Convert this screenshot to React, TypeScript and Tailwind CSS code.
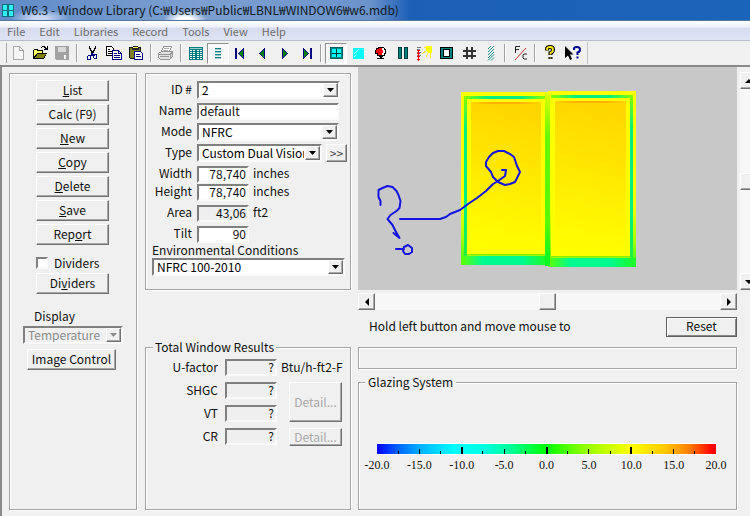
import type { ReactNode } from "react";

const RAISED =
  "border border-t-white border-l-white border-r-[#707070] border-b-[#707070] shadow-[inset_-1px_-1px_0_#a8a8a8] bg-[#f0f0f0]";
const SUNKEN =
  "border-2 border-t-[#808080] border-l-[#808080] border-r-[#fafafa] border-b-[#fafafa]";
const ETCHED = "border border-[#a5a5a5] shadow-[1px_1px_0_#ffffff,inset_1px_1px_0_#ffffff]";

/* ---------- toolbar icons, drawn on a 16 x 16 grid ---------- */

function Glyph({ children }: { children: ReactNode }) {
  return (
    <svg width="16" height="16" viewBox="0 0 16 16" fill="none" shapeRendering="crispEdges" aria-hidden="true">
      {children}
    </svg>
  );
}

const NewIcon = () => (
  <Glyph>
    <path d="M3.5 1.5h6l4 4v9h-10zM9.500 1.500v4h4" stroke="#a8a8a8" fill="#f6f6f6" />
  </Glyph>
);
const OpenIcon = () => (
  <Glyph>
    <path d="M1 14V5h1V4h4v1h5v3h4l-3 6z" fill="#000" />
    <path d="M2 5h3v1h5v2H5l-3 4z" fill="#ffff66" />
    <path d="M5.500 9H14l-2.500 4H3z" fill="#808000" />
    <path d="M9 2h1V1h3v1h1v1h1V1h1v4h-4V4h1V3h-1V2h-2v1H9z" fill="#000" />
  </Glyph>
);
const SaveIcon = () => (
  <Glyph>
    <path d="M1 1h14v14H2l-1-1z" fill="#a2a2a2" />
    <path d="M4 2h8v5H4z" fill="#dadada" />
    <path d="M10 10h2v4h-2z" fill="#f4f4f4" />
  </Glyph>
);
const CutIcon = () => (
  <Glyph>
    <path d="M5 1h1v2h1v2h1v1h1V5h1V3h1V1h1v3h-1v2h-1v2H9v1H8V8H7V6H6V4H5z" fill="#000" />
    <path d="M7 8h2v2h2v1H6v-1h1z" fill="#000080" />
    <path d="M4.500 10.500h2v4h-3v-3zM9.500 9.500h3v4h-2l-1-1z" stroke="#000080" />
  </Glyph>
);
const CopyIcon = () => (
  <Glyph>
    <path d="M.5 1.500h5l2 2v7h-7z" fill="#fff" stroke="#000" />
    <path d="M2 4h2M2 6h4M2 8h4" stroke="#000" />
    <path d="M6.500 5.500h6l3 3v6h-9z" fill="#fff" stroke="#000080" />
    <path d="M12.500 5v3.500H15M8 8.500h3M8 10.500h6M8 12.500h6" stroke="#000080" />
  </Glyph>
);
const PasteIcon = () => (
  <Glyph>
    <path d="M1 2h4V1h5v1h3v12H2l-1-1z" fill="#111" />
    <path d="M2 3h10v10H2z" fill="#808020" />
    <path d="M4 2h7v3H4z" fill="#222" />
    <path d="M5 2h5v1H5z" fill="#ffff55" />
    <path d="M6.500 6.500h6l2 2v6h-8z" fill="#fff" stroke="#000080" />
    <path d="M8 9.500h4M8 11.500h5" stroke="#000080" />
  </Glyph>
);
const PrintIcon = () => (
  <Glyph>
    <path d="M5.500 1.500h8l-2 5h-8z" fill="#f8f8f8" stroke="#969696" />
    <path d="M6 3.500h5M5 5.500h5" stroke="#b0b0b0" />
    <path d="M.5 8.500l3-2h11v5l-3 3h-9l-2-2z" fill="#e2e2e2" stroke="#969696" />
    <path d="M1 9.500h11v4M12 9l3-2M2 11.500h9" stroke="#969696" />
  </Glyph>
);
const GridIcon = () => (
  <Glyph>
    <path d="M1 2h14v13H1z" fill="#007c7c" />
    <path d="M2.500 5v9M6 5v9M9.500 5v9M13 5v9" stroke="#fff" strokeWidth="2" />
    <path d="M2 6.500h12M2 8.500h12M2 10.500h12M2 12.500h12" stroke="#007c7c" />
    <path d="M2 3.500h12" stroke="#9fcccc" />
  </Glyph>
);
const ListIcon = () => (
  <Glyph>
    <path d="M5 3.500h6M5 6.500h6M5 9.500h6M5 12.500h6" stroke="#008080" />
    <path d="M5 4.500h6M5 7.500h6M5 10.500h6M5 13.500h6" stroke="#9ccaca" />
  </Glyph>
);
const FirstIcon = () => (
  <Glyph>
    <path d="M3 3h2v11H3z" fill="#000080" />
    <path d="M12 3v11L6 8.500z" fill="#000080" />
    <path d="M11 5v7L7 8.500z" fill="#008000" />
  </Glyph>
);
const PrevIcon = () => (
  <Glyph>
    <path d="M11 3v11L5 8.500z" fill="#000080" />
    <path d="M10 5v7L6 8.500z" fill="#008000" />
  </Glyph>
);
const NextIcon = () => (
  <Glyph>
    <path d="M6 3v11l6-5.500z" fill="#000080" />
    <path d="M7 5v7l4-3.500z" fill="#008000" />
  </Glyph>
);
const LastIcon = () => (
  <Glyph>
    <path d="M12 3h2v11h-2z" fill="#000080" />
    <path d="M5 3v11l6-5.500z" fill="#000080" />
    <path d="M6 5v7l4-3.500z" fill="#008000" />
  </Glyph>
);
const WindowIcon = () => (
  <Glyph>
    <path d="M2 2h13v12H2z" fill="#006060" />
    <path d="M4 4h9v8H4z" fill="#00ffff" />
    <path d="M8 3h1v10H8zM3 8h11v1H3z" fill="#003838" />
    <path d="M3.500 3.500h10v9h-10z" stroke="#008888" />
  </Glyph>
);
const GlassIcon = () => (
  <Glyph>
    <path d="M3 3h11v11H3z" fill="#00ffff" />
    <path d="M4 9l5-5M4 12l2-2M12 5l1-1" stroke="#b8ffff" />
  </Glyph>
);
const LampIcon = () => (
  <Glyph>
    <path d="M6 2h6v1h1v1h1v5h-1v2h-2v1H7v-1H5V9H3V5h1V3h2z" fill="#000" />
    <path d="M10 3h2v2h1v3h-1v2h-2z" fill="#fff" />
    <path d="M5 4h2V3h3v2h1v3h-1v2H6V8H4V5h1z" fill="#ff0000" />
    <path d="M8 11h2v2h2v1H5v-1h3z" fill="#000" />
  </Glyph>
);
const GapIcon = () => (
  <Glyph>
    <path d="M4 2h4v12H4zM10 2h4v12h-4z" fill="#003c3c" />
    <path d="M5 3h2v10H5zM11 3h2v10h-2z" fill="#008080" />
  </Glyph>
);
const SunIcon = () => (
  <Glyph>
    <path d="M10 1h6v7h-4l-2-2z" fill="#ffff00" />
    <path d="M10 2H8M10 6L6 9M12 8l-2 4M14 8l1 5" stroke="#ffe92a" />
    <path d="M1 2.500h4M1 4.500h3M1 7.500h4M1 10.500h4" stroke="#777" />
    <path d="M2 5h1v11H2z" fill="#ff0000" />
    <path d="M1 5.500h3M1 8.500h3M1 11.500h3M1 14.500h3" stroke="#ff0000" />
  </Glyph>
);
const FrameIcon = () => (
  <Glyph>
    <path d="M2 2h13v12H2z" fill="#000" />
    <path d="M3 3h11v10H3z" fill="#008080" />
    <path d="M5 4h7v8H5z" fill="#000" />
    <path d="M6 5h5v6H6z" fill="#fff" />
  </Glyph>
);
const HashIcon = () => (
  <Glyph>
    <path d="M7 2v12M12 2v12M3 6h13M3 11h13" stroke="#333" strokeWidth="2" />
  </Glyph>
);
const HatchIcon = () => (
  <svg width="16" height="16" viewBox="0 0 16 16" aria-hidden="true">
    <path
      d="M6 4l3-3M6 7l6-6M6 10l6-6M6 13l6-6M6 15.500l6-6M9 15.500l3-3"
      stroke="#208f8f"
      strokeWidth="1"
      fill="none"
    />
  </svg>
);
const UnitsIcon = () => (
  <svg width="16" height="16" viewBox="0 0 16 16" fill="none" aria-hidden="true">
    <path d="M3.500 8V1.500H8M3.500 4.500H7M15 9h-3l-1 1v3l1 1h3" stroke="#222" />
    <path d="M3 15L14 3" stroke="#b03030" />
  </svg>
);
const HelpIcon = () => (
  <svg width="16" height="16" viewBox="0 0 16 16" fill="none" aria-hidden="true">
    <path d="M5 5.500V4q0-2 3-2t3 2.500T8.500 8v2M8.500 12v2" stroke="#000" strokeWidth="4" />
    <path d="M5 5V4q0-2 3-2t3 2.500T8.500 8v1.500M8.500 12.500v1" stroke="#ffee00" strokeWidth="1.800" />
  </svg>
);
const WhatsThisIcon = () => (
  <svg width="18" height="16" viewBox="0 0 18 16" fill="none" aria-hidden="true">
    <path d="M2 1v12l3-2.500L7 15l2-1-2-4.500h3.500z" fill="#000" />
    <path d="M11 5V3.500Q11 2 14 2t3 2.500-2.500 3V10M14.500 11.500v2" stroke="#000090" strokeWidth="2" />
  </svg>
);

type Tool = { name: string; icon: ReactNode; pressed?: boolean };

const TOOL_GROUPS: Tool[][] = [
  [
    { name: "New", icon: <NewIcon /> },
    { name: "Open", icon: <OpenIcon /> },
    { name: "Save", icon: <SaveIcon /> },
  ],
  [
    { name: "Cut", icon: <CutIcon /> },
    { name: "Copy", icon: <CopyIcon /> },
    { name: "Paste", icon: <PasteIcon /> },
  ],
  [{ name: "Print", icon: <PrintIcon /> }],
  [
    { name: "List view", icon: <GridIcon /> },
    { name: "Detail view", icon: <ListIcon />, pressed: true },
    { name: "First record", icon: <FirstIcon /> },
    { name: "Previous record", icon: <PrevIcon /> },
    { name: "Next record", icon: <NextIcon /> },
    { name: "Last record", icon: <LastIcon /> },
  ],
  [
    { name: "Window library", icon: <WindowIcon />, pressed: true },
    { name: "Glass library", icon: <GlassIcon /> },
    { name: "Gas library", icon: <LampIcon /> },
    { name: "Glazing systems", icon: <GapIcon /> },
    { name: "Environmental conditions", icon: <SunIcon /> },
    { name: "Frame library", icon: <FrameIcon /> },
    { name: "Divider library", icon: <HashIcon /> },
    { name: "Shading library", icon: <HatchIcon /> },
  ],
  [{ name: "Units", icon: <UnitsIcon /> }],
  [
    { name: "Help", icon: <HelpIcon /> },
    { name: "Context help", icon: <WhatsThisIcon /> },
  ],
];

function Toolbar() {
  return (
    <div role="toolbar" aria-label="Main" className="flex h-[26px] items-center border-b-2 border-[#8a8a8a] bg-[#f0f0f0] pl-1">
      <div className="h-5 w-[3px] border-r border-[#a8a8a8]" />
      <div className="flex items-center">
        {TOOL_GROUPS.map((group, i) => (
          <div key={i} className="flex items-center">
            {i > 0 && (
              <span className="flex w-2 justify-center">
                <span className="h-[18px] w-0.5 border-r border-l border-r-white border-l-[#a0a0a0]" />
              </span>
            )}
            {group.map((tool) => (
              <button
                key={tool.name}
                type="button"
                aria-label={tool.name}
                aria-pressed={tool.pressed}
                className={
                  tool.pressed
                    ? "flex h-[21px] w-[22px] items-center justify-center border border-t-[#909090] border-r-white border-b-white border-l-[#909090] bg-[#f8f8f8]"
                    : "flex h-[21px] w-[22px] items-center justify-center"
                }
              >
                {tool.icon}
              </button>
            ))}
          </div>
        ))}
      </div>
      <div className="ml-1 h-[22px] border-l border-[#c4c4c4]" />
    </div>
  );
}

/* ---------- form controls ---------- */

function PushButton({ children, className = "" }: { children: ReactNode; className?: string }) {
  return (
    <button
      type="button"
      className={`flex h-[21px] items-center justify-center pb-0.5 whitespace-nowrap ${RAISED} ${className}`}
    >
      <span>{children}</span>
    </button>
  );
}

function Combo({
  id,
  value,
  className = "",
  disabled = false,
}: {
  id: string;
  value: string;
  className?: string;
  disabled?: boolean;
}) {
  return (
    <div className={`relative h-[18px] ${SUNKEN} ${disabled ? "bg-[#f0f0f0]" : "bg-white"} ${className}`}>
      <select
        id={id}
        disabled={disabled}
        defaultValue={value}
        className="block h-[14px] w-full appearance-none overflow-hidden bg-transparent pr-4 pl-[3px] leading-[14px] text-black outline-none disabled:text-[#8c8c8c] disabled:opacity-100"
      >
        <option>{value}</option>
      </select>
      <span
        className={`pointer-events-none absolute top-0 right-0 flex h-[14px] w-[15px] items-center justify-center ${RAISED} ${disabled ? "text-[#8a8a8a]" : "text-black"}`}
      >
        <svg width="7" height="4" viewBox="0 0 7 4" aria-hidden="true">
          <path d="M0 0h7L3.500 4z" fill="currentColor" />
        </svg>
      </span>
    </div>
  );
}

function Field({
  id,
  value,
  className = "",
  readOnly = false,
}: {
  id: string;
  value: string;
  className?: string;
  readOnly?: boolean;
}) {
  return (
    <input
      id={id}
      type="text"
      defaultValue={value}
      readOnly={readOnly}
      className={`h-[17px] px-px pb-0.5 leading-[11px] outline-none ${SUNKEN} ${readOnly ? "bg-[#efefef]" : "bg-white"} ${className}`}
    />
  );
}

function Row({ id, label, children }: { id: string; label: string; children: ReactNode }) {
  return (
    <div className="flex h-[18px] items-center">
      <label htmlFor={id} className="mr-[5px] w-[46px] pb-0.5 text-right">
        {label}
      </label>
      {children}
    </div>
  );
}

function Unit({ children }: { children: ReactNode }) {
  return <span className="pb-0.5 pl-1 whitespace-nowrap">{children}</span>;
}

/* ---------- panels ---------- */

function ActionPanel() {
  return (
    <section aria-label="Actions" className={`flex w-32 shrink-0 flex-col pt-[6px] ${ETCHED}`}>
      <div className="ml-[26px] flex w-[73px] flex-col gap-[3px]">
        <PushButton><u>L</u>ist</PushButton>
        <PushButton>Calc (F9)</PushButton>
        <PushButton><u>N</u>ew</PushButton>
        <PushButton><u>C</u>opy</PushButton>
        <PushButton><u>D</u>elete</PushButton>
        <PushButton><u>S</u>ave</PushButton>
        <PushButton>Rep<u>o</u>rt</PushButton>
      </div>
      <div className="mt-[10px] ml-[26px] flex h-4 items-center gap-[6px]">
        <input id="dividers" type="checkbox" className={`size-3 appearance-none bg-white ${SUNKEN}`} />
        <label htmlFor="dividers">Dividers</label>
      </div>
      <PushButton className="mt-[2px] ml-[26px] w-[73px]">Di<u>v</u>iders</PushButton>
      <label htmlFor="display" className="mt-[14px] ml-6 leading-4">
        Display
      </label>
      <Combo id="display" value="Temperature" disabled className="mt-[2px] ml-[13px] w-[100px]" />
      <PushButton className="mt-[5px] ml-[17px] w-[89px]">Image Control</PushButton>
    </section>
  );
}

function WindowForm() {
  return (
    <section aria-label="Window" className={`flex h-[217px] flex-col gap-[3px] pt-[7px] ${ETCHED}`}>
      <Row id="record" label="ID #">
        <Combo id="record" value="2" className="w-[143px]" />
      </Row>
      <Row id="name" label="Name">
        <Field id="name" value="default" className="w-[142px]" />
      </Row>
      <Row id="mode" label="Mode">
        <Combo id="mode" value="NFRC" className="w-[142px]" />
      </Row>
      <Row id="type" label="Type">
        <Combo id="type" value="Custom Dual Vision" className="w-[125px]" />
        <button type="button" className={`ml-1 flex h-[18px] w-[21px] items-center justify-center text-[#444] ${RAISED}`}>
          &gt;&gt;
        </button>
      </Row>
      <div>
        <Row id="width" label="Width">
          <Field id="width" value="78,740" className="w-[52px] text-right" />
          <Unit>inches</Unit>
        </Row>
        <Row id="height" label="Height">
          <Field id="height" value="78,740" className="w-[52px] text-right" />
          <Unit>inches</Unit>
        </Row>
      </div>
      <Row id="area" label="Area">
        <Field id="area" value="43,06" readOnly className="w-[52px] text-right" />
        <Unit>ft2</Unit>
      </Row>
      <Row id="tilt" label="Tilt">
        <Field id="tilt" value="90" className="w-[52px] text-right" />
      </Row>
      <div className="ml-[6px]">
        <label htmlFor="environment" className="block h-3 leading-[8px]">
          Environmental Conditions
        </label>
        <Combo id="environment" value="NFRC 100-2010" className="w-[193px]" />
      </div>
    </section>
  );
}

function ResultField({ id, label }: { id: string; label: string }) {
  return (
    <>
      <label htmlFor={id} className="pr-[7px] pb-px text-right">
        {label}
      </label>
      <Field id={id} value="?" readOnly className="w-full text-right" />
    </>
  );
}

function Results() {
  const detail = `border text-[#a8a8a8] ${RAISED}`;
  return (
    <fieldset className={`min-w-0 flex-1 ${ETCHED}`}>
      <legend className="ml-[7px] bg-[#f0f0f0] px-[2px] leading-4">Total Window Results</legend>
      <div className="grid grid-cols-[79px_52px_1fr] grid-rows-[17px_17px_17px_17px] items-center gap-y-[6px] pt-1">
        <ResultField id="ufactor" label="U-factor" />
        <Unit>Btu/h-ft2-F</Unit>
        <ResultField id="shgc" label="SHGC" />
        <button type="button" disabled className={`row-span-2 ml-3 h-10 w-[53px] ${detail}`}>
          Detail...
        </button>
        <ResultField id="vt" label="VT" />
        <ResultField id="cr" label="CR" />
        <button type="button" disabled className={`ml-3 h-[18px] w-[53px] leading-[14px] ${detail}`}>
          Detail...
        </button>
      </div>
    </fieldset>
  );
}

/* ---------- temperature image ---------- */

function Pane({ x, y, w, h, flip }: { x: number; y: number; w: number; h: number; flip?: boolean }) {
  const inner = flip ? x + 3 : x + 6;
  const side = flip ? x + w - 6 : x + 3;
  return (
    <g>
      <rect x={x} y={y} width={w} height={h} fill="url(#frame)" />
      <rect x={x + 3} y={y + 4} width={w - 6} height={h - 9} fill="#9dfa00" />
      <rect x={x + 3} y={y + 4} width={w - 6} height="3" fill="url(#cool)" />
      <rect x={side} y={y + 5} width="3" height={h - 14} fill="url(#side)" />
      <rect x={x} y={y + h - 9} width={w} height="9" fill="url(#sill)" />
      <rect x={inner} y={y + 7} width={w - 9} height={h - 17} fill="#fbff00" />
      <rect x={inner + 4} y={y + 10} width={w - 17} height={h - 24} fill="url(#glass)" />
      <rect x={inner + 6} y={y + 10} width={w - 21} height="2" fill="url(#hot)" />
      <rect x={inner} y={y + h - 11} width={w - 9} height="1" fill="#8aee00" />
    </g>
  );
}

function TemperatureImage() {
  return (
    <svg className="block h-[223px] w-full bg-[#c8c8c8]" viewBox="0 0 379 223" role="img" aria-label="Window temperature">
      <defs>
        <linearGradient id="frame" x1="0" y1="0" x2="0" y2="1">
          <stop offset="0" stopColor="#fbff00" />
          <stop offset="0.650" stopColor="#f4ff00" />
          <stop offset="0.850" stopColor="#a8ff00" />
          <stop offset="1" stopColor="#30f820" />
        </linearGradient>
        <linearGradient id="glass" x1="0.300" y1="0" x2="0.200" y2="1">
          <stop offset="0" stopColor="#ffd600" />
          <stop offset="0.450" stopColor="#ffe900" />
          <stop offset="0.850" stopColor="#fffa00" />
          <stop offset="1" stopColor="#ffff00" />
        </linearGradient>
        <linearGradient id="cool">
          <stop offset="0" stopColor="#86ff00" />
          <stop offset="0.300" stopColor="#00f080" />
          <stop offset="0.700" stopColor="#00f080" />
          <stop offset="1" stopColor="#86ff00" />
        </linearGradient>
        <linearGradient id="side" x1="0" y1="0" x2="0" y2="1">
          <stop offset="0" stopColor="#86ff00" />
          <stop offset="0.200" stopColor="#00ef80" />
          <stop offset="0.750" stopColor="#00ef80" />
          <stop offset="1" stopColor="#20f040" />
        </linearGradient>
        <linearGradient id="sill">
          <stop offset="0" stopColor="#60ff00" />
          <stop offset="0.250" stopColor="#00fa90" />
          <stop offset="0.700" stopColor="#00fa90" />
          <stop offset="1" stopColor="#20fa20" />
        </linearGradient>
        <linearGradient id="hot">
          <stop offset="0" stopColor="#ffd000" />
          <stop offset="0.300" stopColor="#ffb000" />
          <stop offset="0.700" stopColor="#ffb000" />
          <stop offset="1" stopColor="#ffd000" />
        </linearGradient>
        <linearGradient id="mullion" x1="0" y1="0" x2="0" y2="1">
          <stop offset="0" stopColor="#e0ff00" />
          <stop offset="0.250" stopColor="#66f800" />
          <stop offset="0.750" stopColor="#58f800" />
          <stop offset="1" stopColor="#00f828" />
        </linearGradient>
      </defs>
      <Pane x={103} y={25} w={87} h={173} />
      <Pane x={190} y={24} w={88} h={176} flip />
      <rect x="187" y="26" width="5" height="173" fill="url(#mullion)" />
      <g fill="none" stroke="#1414e0" strokeWidth="2" strokeLinecap="round" strokeLinejoin="round">
        <path d="M22.500 138v-4l-2-4v-7l4-2 5-2 5 1 4 4 2 4 2 6-1 7-3 3-6 4-3 4 5 6 3 6 4 7-6-5" />
        <path d="M42 152h40l6-2 4-3 10-4 8-6 9-6 9-7 7-7 5-3 7-5 1-6h-4" />
        <path d="M140 115l-5-5-2-5-5-6v-4l3-5 4-4 5-2h6l6 3 4 3 2 6 1 3 3 6-3 6-2 4-5 2-5 1z" />
        <path d="M38 182h8m0-2l4-2 4 3v4l-3 2h-4l-2-3z" />
      </g>
    </svg>
  );
}

function ScrollArrow({ label, path }: { label: string; path: string }) {
  return (
    <button
      type="button"
      aria-label={label}
      className={`flex size-[17px] shrink-0 items-center justify-center ${RAISED}`}
    >
      <svg width="8" height="8" viewBox="0 0 8 8" aria-hidden="true">
        <path d={path} fill="#000" />
      </svg>
    </button>
  );
}

function HorizontalScroll() {
  return (
    <div className="mt-[3px] flex h-[17px] bg-[#f7f7f7]">
      <ScrollArrow label="Rotate left" path="M6 0v8L2 4z" />
      <span className="flex-1" />
      <button type="button" aria-label="Horizontal position" className={`w-[17px] ${RAISED}`} />
      <span className="flex-1" />
      <ScrollArrow label="Rotate right" path="M2 0v8l4-4z" />
    </div>
  );
}

function VerticalScroll() {
  return (
    <div className="mt-[5px] ml-[3px] h-[218px] w-[10px] shrink-0 overflow-hidden">
      <div className="flex h-full w-[17px] flex-col bg-[#f7f7f7]">
        <ScrollArrow label="Rotate up" path="M0 6h8L4 2z" />
        <span className="flex-1" />
        <button type="button" aria-label="Vertical position" className={`h-[17px] ${RAISED}`} />
        <span className="flex-1" />
        <ScrollArrow label="Rotate down" path="M0 2h8L4 6z" />
      </div>
    </div>
  );
}

const SCALE = ["-20.0", "-15.0", "-10.0", "-5.0", "0.0", "5.0", "10.0", "15.0", "20.0"];
const TICKS = Array.from({ length: 17 }, (_, i) => i);

function tickClass(i: number) {
  if (i === 0 || i === 16) return "h-0 w-0";
  if (i % 4 === 0) return "h-[7px] w-0.5 bg-black";
  if (i % 2 === 0) return "h-[5px] w-px bg-black";
  return "h-[3px] w-px bg-black";
}

function ColourScale() {
  return (
    <div className="mt-[53px] mr-5 ml-[18px]">
      <div className="flex h-3 items-end justify-between border-y border-white bg-[linear-gradient(to_right,#0000ff_0%,#0060ff_6%,#00b4ff_13%,#00ffff_23%,#00ffe0_32%,#00ff90_40%,#00ff00_50%,#90ff00_61%,#ffff00_75%,#ffc800_85%,#ff8000_92%,#ff0000_99%)]">
        {TICKS.map((i) => (
          <span key={i} className="flex w-0 justify-center">
            <span className={`shrink-0 ${tickClass(i)}`} />
          </span>
        ))}
      </div>
      <div className="mt-[2px] flex justify-between font-['Liberation_Serif',serif] text-[12px] leading-4">
        {SCALE.map((label) => (
          <span key={label} className="flex w-0 justify-center">
            {label}
          </span>
        ))}
      </div>
    </div>
  );
}

function Viewer() {
  return (
    <div className="flex min-w-0 flex-1">
      <div className="flex min-w-0 flex-1 flex-col pb-[6px]">
        <TemperatureImage />
        <HorizontalScroll />
        <div className="mt-[7px] flex h-5 items-center justify-between">
          <span className="pb-[3px] pl-[11px]">Hold left button and move mouse to</span>
          <button
            type="button"
            className="h-5 w-[71px] border border-[#606060] bg-[#f0f0f0] pb-[3px] leading-[15px] shadow-[inset_1px_1px_0_#ffffff,inset_-1px_-1px_0_#888888]"
          >
            Reset
          </button>
        </div>
        <div className={`mt-[10px] h-[22px] ${ETCHED}`} />
        <fieldset className={`mt-[5px] min-w-0 flex-1 ${ETCHED}`}>
          <legend className="ml-[6px] bg-[#f0f0f0] px-[3px] leading-4">Glazing System</legend>
          <ColourScale />
        </fieldset>
      </div>
      <VerticalScroll />
    </div>
  );
}

const MENUS = ["File", "Edit", "Libraries", "Record", "Tools", "View", "Help"];

export default function App() {
  return (
    <div className="flex min-h-screen flex-col overflow-hidden bg-[#f0f0f0] font-['Noto_Sans_CJK_KR',sans-serif] text-[12px] leading-4 text-[#111]">
      <header className="flex h-[21px] items-center border-b border-[#56749c] bg-[radial-gradient(ellipse_22px_10px_at_185px_20px,#ffffff_30%,transparent),radial-gradient(ellipse_30px_9px_at_40px_18px,#c9d8f4_20%,transparent),linear-gradient(to_right,#5f8cc8_0px,#7c9fd0_200px,#6b93cb_370px,#1c5fb6_410px,#1a64ba_100%)] pl-[2px] text-[#101820]">
        <svg width="12" height="13" viewBox="0 0 12 13" className="mr-[7px]" aria-hidden="true">
          <path d="M0 0h12v13H0z" fill="#107080" />
          <path d="M1 1h4v5H1zM7 1h4v5H7zM1 7h4v5H1zM7 7h4v5H7z" fill="#30f0f4" />
        </svg>
        <h1>W6.3 - Window Library (C:₩Users₩Public₩LBNL₩WINDOW6₩w6.mdb)</h1>
      </header>
      <nav
        aria-label="Menu"
        className="flex h-5 items-center gap-[14px] border-b border-[#b8bccb] bg-[linear-gradient(#ffffff_0%,#eef1f9_30%,#d6dcef_40%,#dfe4f4_100%)] pl-[7px] text-[11px] text-[#6c6c6c]"
      >
        {MENUS.map((name) => (
          <button key={name} type="button">
            {name}
          </button>
        ))}
      </nav>
      <Toolbar />
      <main className="flex flex-1 border-l-2 border-[#8a8a8a] pl-[7px]">
        <div className="flex pt-[6px] pb-[6px]">
          <ActionPanel />
        </div>
        <div className="mr-[7px] ml-2 flex w-[206px] shrink-0 flex-col gap-[49px] pt-[6px] pb-[6px]">
          <WindowForm />
          <Results />
        </div>
        <Viewer />
      </main>
    </div>
  );
}
